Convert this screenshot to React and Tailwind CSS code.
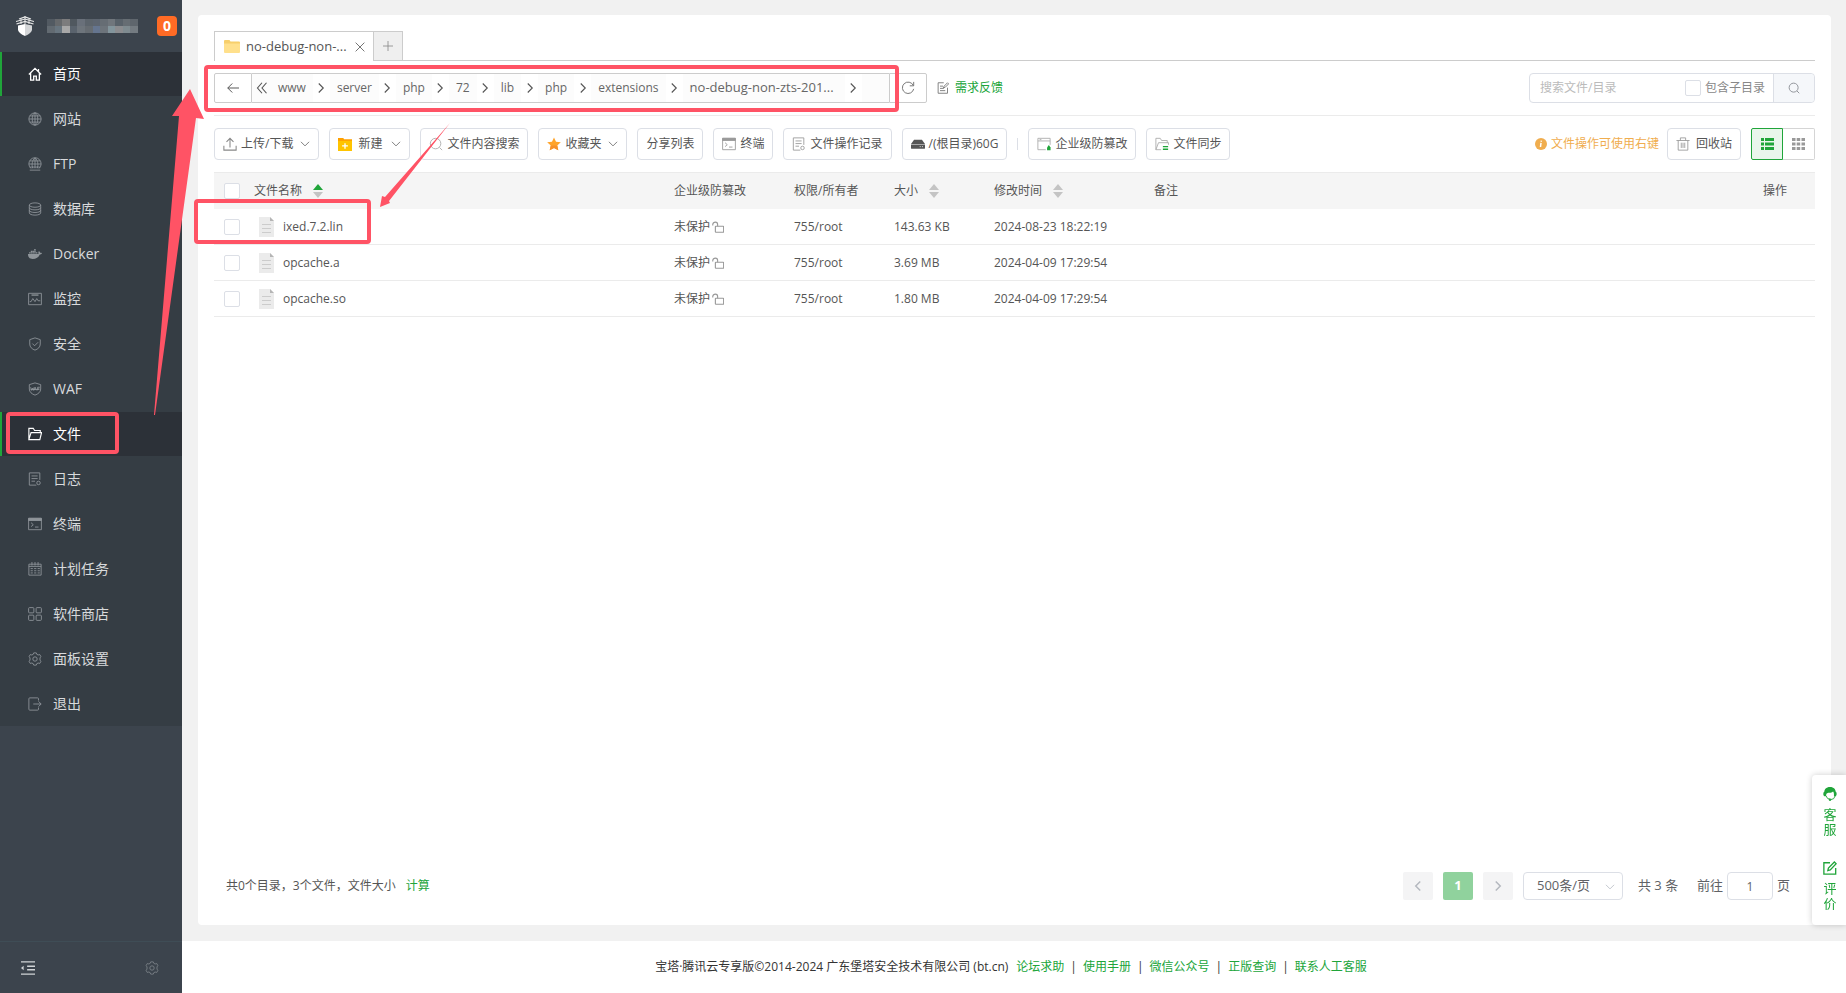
import clsx from "clsx";
import { FaDocker } from "react-icons/fa";

/* ---------- icons ---------- */

function Icon({ children, className = "size-3.5", box = "0 0 16 16", width = 1 }) {
  return (
    <svg
      viewBox={box}
      className={clsx("shrink-0", className)}
      fill="none"
      stroke="currentColor"
      strokeWidth={width}
      aria-hidden="true"
    >
      {children}
    </svg>
  );
}

const glyphs = {
  home: <path strokeWidth="1.5" d="M1 8.500 8 1.500l7 7M3 7v8h3.500v-4.500h3V15H13V7M12 5V2.200" />,
  globe: (
    <>
      <circle cx="8" cy="8" r="7" />
      <ellipse cx="8" cy="8" rx="3.200" ry="7" />
      <path d="M8 1v14M1 8h14M2 4.500h12M2 11.500h12" />
    </>
  ),
  ftp: (
    <>
      <path d="M3.500 13.200A7 7 0 1 1 12.500 13.200" />
      <path d="M5.500 13C4 9 4.500 4 8 1c3.500 3 4 8 2.500 12M8 1v12M1 8h14M2 4.500h12M2 11.500h12M2 15h12" />
    </>
  ),
  database: (
    <>
      <ellipse cx="8" cy="3.500" rx="6.500" ry="2.500" />
      <path d="M1.500 3.500v9c0 1.400 2.900 2.500 6.500 2.500s6.500-1.100 6.500-2.500v-9M1.500 6.500C1.500 8 4.400 9 8 9s6.500-1 6.500-2.500M1.500 9.500C1.500 11 4.400 12 8 12s6.500-1 6.500-2.500" />
    </>
  ),
  monitor: (
    <>
      <path d="M.7 1.500h14.600v13H.7z" />
      <path strokeWidth="1.500" d="M4 3.500h8" />
      <path d="M2 11h1.500L5.500 7.500 8 11l2-3.500 1.500 2.500H14" />
    </>
  ),
  shield: (
    <>
      <path d="m8 1 6 2v5c0 3.500-2.500 5.800-6 7-3.500-1.200-6-3.500-6-7V3z" />
      <path d="m5 7.500 2.500 2.500L11.500 6" />
    </>
  ),
  waf: (
    <>
      <path d="m8 1 6.500 2v5c0 3.500-3 5.800-6.500 7-3.500-1.200-6.500-3.500-6.500-7V3z" />
      <path d="m3 6 1 3.500L5 7l1 2.500L7 6m0 3.500L8.200 6l1.300 3.500M11 9.500V6h2.500M11 7.800h2M3 8.500h10" />
    </>
  ),
  folder: <path strokeWidth="1.300" d="M1 14.500v-13h5l1.500 2.500H14v2.500M1 14.500 3.500 6.500h12L13.500 14.500z" />,
  log: (
    <>
      <path d="M13.500 9V1h-12v14h8M4 4.500h7M4 7.500h7M4 10.500h4" />
      <circle cx="12" cy="12.500" r="2" />
    </>
  ),
  terminal: (
    <>
      <path d="M.7 1.500h14.600v13H.7z" />
      <path fill="currentColor" d="M.7 1.500h14.600V4H.7z" />
      <path d="m3.500 6.500 2.500 2.300L3.500 11M8 11.500h4" />
    </>
  ),
  calendar: (
    <>
      <path d="M1 2.500h14v12.500H1zM4.500 0v4M8 0v4M11.500 0v4M1 5h14" />
      <path d="M3 7.500h2.500M7 7.500h2.500M11 7.500h2.500M3 10h2.500M7 10h2.500M11 10h2.500M3 12.500h2.500M7 12.500h2.500M11 12.500h2.500" />
    </>
  ),
  grid: (
    <>
      <rect x=".7" y=".7" width="6" height="6" rx="1" />
      <rect x="9.300" y=".7" width="6" height="6" rx="1" />
      <rect x=".7" y="9.300" width="6" height="6" rx="1" />
      <rect x="9.300" y="9.300" width="6" height="6" rx="1" />
    </>
  ),
  gear: (
    <>
      <path d="m6.500 1-.6 1.700-1.500.7-1.800-.5L1.300 5.200l1 1.600v2.400l-1 1.600 1.300 2.300 1.800-.5 1.500.7.600 1.700h3l.6-1.700 1.500-.7 1.800.5 1.300-2.300-1-1.600V6.800l1-1.600-1.300-2.300-1.800.5-1.500-.7L9.500 1z" />
      <circle cx="8" cy="8" r="2.500" />
    </>
  ),
  exit: <path d="M12 4V2q0-1-1-1H2q-1 0-1 1v12q0 1 1 1h9q1 0 1-1v-2M6 8h9M12 5l3 3-3 3" />,
  upload: <path strokeWidth="1.200" d="M1 10v5h14v-5M8 12V2M4 5.500 8 1.500l4 4" />,
  search: (
    <>
      <circle cx="7.500" cy="7.500" r="6" />
      <path d="m12 12 3 3" />
    </>
  ),
  lock: (
    <>
      <rect x="4.500" y="7" width="11" height="8" rx=".8" strokeWidth="1.500" />
      <path strokeWidth="1.500" d="M7.500 7V4.500q0-3-3-3T1 4.500V6" />
    </>
  ),
  trash: <path d="M2.500 4v11h11V4M.5 4h15M5 4V1h6v3M6 6.500v6M8 6.500v6M10 6.500v6" />,
  note: <path strokeWidth="1.200" d="M14 7.500V15H1.500V1H9M4 5.500h4M4 8.500h5M4 11.500h7M8.500 8l1-2.500L14 1l1.500 1.500L11 7z" />,
  edit: <path strokeWidth="1.500" d="M14.500 8v7H1V2h7M5.500 11l.7-3L13 1.200l2 2L8.300 10.200z" />,
};

function Glyph({ name, className, width }) {
  if (name === "docker") return <FaDocker className={clsx("shrink-0", className)} aria-hidden="true" />;
  return (
    <Icon className={className} width={width}>
      {glyphs[name]}
    </Icon>
  );
}

function Chevron({ className, dir = "right" }) {
  return (
    <Icon className={className}>
      {dir === "right" && <path d="m5 2 6 6-6 6" />}
      {dir === "left" && <path d="M11 2 5 8l6 6" />}
      {dir === "down" && <path d="m1.500 4.500 6.500 6.500 6.500-6.500" />}
    </Icon>
  );
}

function Logo() {
  return (
    <svg viewBox="0 0 18 20" className="h-5 w-[18px]" aria-hidden="true">
      <path fill="#fff" d="M2 9.500 9 8v12q-6-2.500-7-6z" />
      <path fill="#d4d6d8" d="m9 8 7 1.500V14q-1 3.500-7 6z" />
      <path stroke="#e8e8e8" fill="none" strokeWidth="1.200" d="M.5 8 9 5.500 17.500 8M0 5.500 9 3l9 2.500M3 3l6-2 6 2" />
      <path stroke="#e8e8e8" strokeWidth="1" d="M5 2.500V8M13 2.500V8M9 0v8" />
    </svg>
  );
}

function NewFolderIcon() {
  return (
    <Icon className="size-3.5">
      <path fill="#ffa000" stroke="none" d="M0 1h6l1 1.500h9V6H0z" />
      <path fill="#ffc400" stroke="none" d="M0 4.500h16V16H0z" />
      <path stroke="#fff" strokeWidth="1.500" d="M8 7v6.500M4.700 10.200h6.600" />
    </Icon>
  );
}

function TabFolderIcon() {
  return (
    <Icon className="size-4">
      <path fill="#f7cf6b" stroke="none" d="M0 2q0-1 1-1h4.500l1 1.500H15q1 0 1 1V6H0z" />
      <path fill="#ffe08c" stroke="none" d="M0 4.500h16V13q0 1-1 1H1q-1 0-1-1z" />
    </Icon>
  );
}

function StarIcon() {
  return (
    <Icon className="size-3.5">
      <path fill="#ffa42b" stroke="none" d="m8 .5 2.300 5 5.500.6-4.100 3.600 1.200 5.500L8 12.500l-4.900 2.700 1.200-5.500L.2 6.100l5.500-.6z" />
      <path fill="#f7912a" stroke="none" d="m8 12.500 4.900 2.700-1.200-5.500L4.300 9.700l-1.200 5.500z" />
    </Icon>
  );
}

function DiskIcon() {
  return (
    <Icon className="size-3.5 text-[#555]">
      <path fill="currentColor" stroke="none" d="M3.500 3h9L16 8H0zM0 8.500h16v4q0 1-1 1H1q-1 0-1-1z" />
      <path stroke="#fff" d="M10 11h1M12.500 11h1" />
    </Icon>
  );
}

function TamperIcon() {
  return (
    <Icon className="size-3.5 text-[#aaa]">
      <path d="M15 9V1.500H1v13h9M1 4.500h14M3 3h2" />
      <path fill="#20a53a" stroke="none" d="M11.500 12 13.500 9l2 3v3h-4z" />
    </Icon>
  );
}

function SyncIcon() {
  return (
    <Icon className="size-3.5 text-[#aaa]">
      <path d="M7 14.500H1v-13h5L7.500 4H14v3M1 14.500 4 6.500h11.500V9" />
      <path stroke="#20a53a" strokeWidth="1.500" d="M9 11h6M9 14h6" />
    </Icon>
  );
}

function FileIcon() {
  return (
    <svg viewBox="0 0 15 20" className="h-5 w-[15px] shrink-0" aria-hidden="true">
      <path fill="#ebebeb" d="M0 0h11l4 4v16H0z" />
      <path fill="#b5b5b5" d="M11 0l4 4h-4z" />
      <path stroke="#ccc" d="M3 7.500h9M3 11.500h9M3 15.500h9" />
    </svg>
  );
}

function SortIcon({ asc }) {
  return (
    <svg viewBox="0 0 10 14" className="h-3.5 w-2.5" aria-hidden="true">
      <path d="M0 6h10L5 0z" fill={asc ? "#20a53a" : "#c4c4c4"} />
      <path d="M0 8h10l-5 6z" fill="#c4c4c4" />
    </svg>
  );
}

/* ---------- sidebar ---------- */

const menu = [
  { label: "首页", icon: "home", active: true },
  { label: "网站", icon: "globe" },
  { label: "FTP", icon: "ftp" },
  { label: "数据库", icon: "database" },
  { label: "Docker", icon: "docker" },
  { label: "监控", icon: "monitor" },
  { label: "安全", icon: "shield" },
  { label: "WAF", icon: "waf" },
  { label: "文件", icon: "folder", active: true },
  { label: "日志", icon: "log" },
  { label: "终端", icon: "terminal" },
  { label: "计划任务", icon: "calendar" },
  { label: "软件商店", icon: "grid" },
  { label: "面板设置", icon: "gear" },
  { label: "退出", icon: "exit" },
];

// masked host name
const mosaic = [
  "#525a62", "#66696c", "#7c7c7d", "#50585f", "#69707a", "#5c646c", "#5d6570", "#666d74", "#70767c", "#59626a", "#666d73", "#5f666d",
  "#626a71", "#68757f", "#a8a8a8", "#5a636d", "#6e757c", "#666c72", "#65758f", "#6d747b", "#83959c", "#8b8c8f", "#7f8b90", "#747b81",
];

function Sidebar() {
  return (
    <aside className="flex w-[182px] shrink-0 flex-col bg-[#3c444d]">
      <div className="flex h-[52px] items-center pr-[5px] pl-4">
        <Logo />
        <div className="ml-[13px] grid h-3.5 w-[91px] grid-cols-12 grid-rows-2">
          {mosaic.map((c, i) => (
            <span key={i} style={{ backgroundColor: c }} />
          ))}
        </div>
        <span className="ml-auto flex size-5 items-center justify-center rounded bg-[#ff6b25] text-sm font-bold text-white">0</span>
      </div>
      <nav className="flex flex-col gap-px bg-[#353d44]">
        {menu.map((m) => (
          <a
            key={m.label}
            href="#"
            className={clsx(
              "flex h-11 items-center gap-[11px] border-l-2 pl-[26px] text-sm",
              m.active ? "border-[#20a53a] bg-[#2c3138] text-white" : "border-transparent text-[#d8dadc]"
            )}
          >
            <Glyph name={m.icon} className={clsx("size-3.5", !m.active && "text-[#8f959a]")} />
            {m.label}
          </a>
        ))}
      </nav>
      <div className="mt-auto flex h-[52px] items-center justify-between border-t border-[#3f4d56] pr-[23px] pl-[21px]">
        <button type="button" aria-label="收起菜单" className="text-[#d0d3d6]">
          <Icon className="size-3.5">
            <path d="M0 1h16M7 6h9M7 10h9M0 15h16" strokeWidth="1.500" />
            <path d="M0 8l3-2.500v5z" fill="currentColor" stroke="none" />
          </Icon>
        </button>
        <button type="button" aria-label="设置" className="text-[#7b8288]">
          <Glyph name="gear" />
        </button>
      </div>
    </aside>
  );
}

/* ---------- file manager ---------- */

const crumbs = ["www", "server", "php", "72", "lib", "php", "extensions"];

function PathBar() {
  return (
    <div className="mt-3 flex items-center border-b border-[#ebebeb] pb-3">
      <button type="button" aria-label="后退" className="flex h-[30px] w-[38px] items-center justify-center rounded-l-xs border border-[#ccc] text-[#555]">
        <Icon className="size-3">
          <path d="M1 8h15M7 2 1 8l6 6" strokeWidth="1.300" />
        </Icon>
      </button>
      <div className="flex h-[30px] w-[637px] items-stretch border-y border-[#ccc] bg-white text-xs text-[#666]">
        <span className="flex w-[19px] items-center justify-center bg-[#fcfcfc]">
          <Icon className="size-3 text-[#555]">
            <path d="M8 1 2 8l6 7M14 1 8 8l6 7" strokeWidth="1.500" />
          </Icon>
        </span>
        {crumbs.map((c, i) => (
          <span key={i} className="flex items-stretch">
            <a href="#" className="flex items-center bg-[#fcfcfc] px-[7px]">{c}</a>
            <span className="flex w-[17px] items-center justify-center">
              <Chevron className="size-3 text-[#555] stroke-[1.5]" />
            </span>
          </span>
        ))}
        <a href="#" className="flex w-[162px] items-center bg-[#fcfcfc] px-[7px] text-[13px]">no-debug-non-zts-201...</a>
        <span className="flex w-[17px] items-center justify-center">
          <Chevron className="size-3 text-[#555] stroke-[1.5]" />
        </span>
        <span className="flex-1 bg-[#fcfcfc]" />
      </div>
      <button type="button" aria-label="刷新" className="flex h-[30px] w-[38px] items-center justify-center rounded-r-xs border border-[#ccc] text-[#666]">
        <Icon className="size-3.5">
          <path d="M14 5A6.500 6.500 0 1 0 14.500 9M14.500 1v4.500H10" />
        </Icon>
      </button>
      <a href="#" className="ml-[10px] flex items-center gap-1.5 text-xs text-[#20a53a]">
        <Glyph name="note" className="size-3 text-[#777]" />
        需求反馈
      </a>
      <div className="ml-auto flex h-[30px] w-[286px] rounded border border-[#dcdfe6]">
        <input
          type="text"
          aria-label="搜索文件/目录"
          placeholder="搜索文件/目录"
          className="min-w-0 flex-1 pl-2.5 text-xs outline-none placeholder:text-[#bbb]"
        />
        <label className="flex items-center gap-1 pr-2 text-xs text-[#888]">
          <Checkbox />
          包含子目录
        </label>
        <button type="button" aria-label="搜索" className="flex w-[41px] items-center justify-center rounded-r border-l border-[#dcdfe6] bg-[#f5f7fa] text-[#909399]">
          <Glyph name="search" className="size-3" width={1.3} />
        </button>
      </div>
    </div>
  );
}

function Checkbox(props) {
  return <input type="checkbox" className="block size-4 shrink-0 appearance-none rounded-xs border border-[#dcdfe6] bg-white" {...props} />;
}

function ToolButton({ icon, children, menu: hasMenu, gap = "gap-1" }) {
  return (
    <button type="button" className={clsx("flex h-8 items-center rounded border border-[#dcdfe6] bg-white px-2 text-xs whitespace-nowrap text-[#555]", gap)}>
      {icon}
      {children}
      {hasMenu && <Chevron dir="down" className="ml-[3px] size-2.5 stroke-[1.5] text-[#777]" />}
    </button>
  );
}

function Toolbar() {
  return (
    <div className="flex items-center gap-2.5 py-3">
      <ToolButton icon={<Glyph name="upload" className="size-3.5 text-[#888]" />} menu>上传/下载</ToolButton>
      <ToolButton icon={<NewFolderIcon />} menu gap="gap-1.5">新建</ToolButton>
      <ToolButton icon={<Glyph name="search" className="size-3.5 text-[#aaa]" />}>文件内容搜索</ToolButton>
      <ToolButton icon={<StarIcon />} menu>收藏夹</ToolButton>
      <ToolButton>分享列表</ToolButton>
      <ToolButton icon={<Glyph name="terminal" className="size-3.5 text-[#999]" />}>终端</ToolButton>
      <ToolButton icon={<Glyph name="log" className="size-3.5 text-[#999]" />}>文件操作记录</ToolButton>
      <ToolButton icon={<DiskIcon />}>/(根目录)60G</ToolButton>
      <span className="h-3 w-px bg-[#dcdfe6]" />
      <ToolButton icon={<TamperIcon />}>企业级防篡改</ToolButton>
      <ToolButton icon={<SyncIcon />}>文件同步</ToolButton>
      <div className="ml-auto flex items-center">
        <Icon className="mr-1 size-3">
          <circle cx="8" cy="8" r="8" fill="#f0ad4e" stroke="none" />
          <path d="M8.500 3.500 8.300 5M8 6.500 7.300 12" stroke="#fff" strokeWidth="2" />
        </Icon>
        <span className="mr-2 text-xs text-[#f0ad4e]">文件操作可使用右键</span>
        <ToolButton gap="gap-1.5" icon={<Glyph name="trash" className="size-3.5 text-[#999]" />}>回收站</ToolButton>
        <button type="button" aria-label="列表视图" className="ml-2.5 flex size-8 items-center justify-center rounded-l-xs border border-[#20a53a] bg-[#e9f6eb] text-[#20a53a]">
          <svg viewBox="0 0 13 12" className="h-3 w-[13px]" fill="currentColor" aria-hidden="true">
            <path d="M0 0h3v3H0zM4 0h9v3H4zM0 4.500h3v3H0zM4 4.500h9v3H4zM0 9h3v3H0zM4 9h9v3H4z" />
          </svg>
        </button>
        <button type="button" aria-label="图标视图" className="flex size-8 items-center justify-center rounded-r-xs border border-l-0 border-[#d5d5d5] text-[#999]">
          <svg viewBox="0 0 13 12" className="h-3 w-[13px]" fill="currentColor" aria-hidden="true">
            <path d="M0 0h3.500v3H0zM4.700 0h3.500v3H4.700zM9.500 0H13v3H9.500zM0 4.500h3.500v3H0zM4.700 4.500h3.500v3H4.700zM9.500 4.500H13v3H9.500zM0 9h3.500v3H0zM4.700 9h3.500v3H4.700zM9.500 9H13v3H9.500z" />
          </svg>
        </button>
      </div>
    </div>
  );
}

const files = [
  { name: "ixed.7.2.lin", size: "143.63 KB", time: "2024-08-23 18:22:19" },
  { name: "opcache.a", size: "3.69 MB", time: "2024-04-09 17:29:54" },
  { name: "opcache.so", size: "1.80 MB", time: "2024-04-09 17:29:54" },
];

function FileTable() {
  return (
    <table className="w-full table-fixed border-separate border-spacing-0 text-left text-xs text-[#555]">
      <colgroup>
        <col className="w-[30px]" />
        <col className="w-[420px]" />
        <col className="w-[120px]" />
        <col className="w-[100px]" />
        <col className="w-[100px]" />
        <col className="w-[160px]" />
        <col />
        <col className="w-[100px]" />
      </colgroup>
      <thead>
        <tr className="bg-[#f5f5f5] *:h-[37px] *:border-t *:border-[#ebebeb] *:px-2.5 *:font-normal">
          <th><Checkbox aria-label="全选" /></th>
          <th>
            <span className="flex items-center gap-[11px]">文件名称<SortIcon asc /></span>
          </th>
          <th>企业级防篡改</th>
          <th>权限/所有者</th>
          <th>
            <span className="flex items-center gap-[11px]">大小<SortIcon /></span>
          </th>
          <th>
            <span className="flex items-center gap-[11px]">修改时间<SortIcon /></span>
          </th>
          <th>备注</th>
          <th className="text-right"><span className="pr-[18px]">操作</span></th>
        </tr>
      </thead>
      <tbody>
        {files.map((f) => (
          <tr key={f.name} className="*:h-9 *:border-b *:border-[#ebebeb] *:px-2.5">
            <td><Checkbox aria-label={f.name} /></td>
            <td>
              <span className="flex items-center gap-[9px] pl-[5px]"><FileIcon />{f.name}</span>
            </td>
            <td>
              <span className="flex items-center gap-0.5">
                未保护<Glyph name="lock" className="size-3 text-[#999]" />
              </span>
            </td>
            <td>755/root</td>
            <td>{f.size}</td>
            <td className="whitespace-nowrap">{f.time}</td>
            <td />
            <td />
          </tr>
        ))}
      </tbody>
    </table>
  );
}

function Pagination() {
  return (
    <div className="mt-auto flex items-center pr-[25px] pb-[25px] pl-3 text-xs text-[#555]">
      <span>共0个目录，3个文件，文件大小</span>
      <a href="#" className="ml-2.5 text-[#20a53a]">计算</a>
      <div className="ml-auto flex items-center text-[13px] text-[#606266]">
        <button type="button" aria-label="上一页" className="flex h-7 w-[30px] items-center justify-center rounded-xs bg-[#f4f4f5] text-[#b4b8bf]">
          <Chevron dir="left" className="size-3 stroke-2" />
        </button>
        <button type="button" className="ml-2.5 flex h-7 w-[30px] items-center justify-center rounded-xs bg-[#90d29d] font-bold text-white">1</button>
        <button type="button" aria-label="下一页" className="ml-2.5 flex h-7 w-[30px] items-center justify-center rounded-xs bg-[#f4f4f5] text-[#b4b8bf]">
          <Chevron className="size-3 stroke-2" />
        </button>
        <div className="relative ml-2.5">
          <select aria-label="每页条数" className="block h-7 w-[100px] appearance-none rounded border border-[#dcdfe6] bg-white pl-[13px]">
            <option>500条/页</option>
          </select>
          <Chevron dir="down" className="pointer-events-none absolute top-2.5 right-2 size-2.5 stroke-[1.5] text-[#c0c4cc]" />
        </div>
        <span className="ml-[15px] w-[42px] whitespace-nowrap">共 3 条</span>
        <label className="ml-[17px] flex items-center gap-1">
          前往
          <input type="text" defaultValue="1" className="h-7 w-[46px] rounded border border-[#dcdfe6] text-center text-xs" />
          页
        </label>
      </div>
    </div>
  );
}

function FileManager() {
  return (
    <section className="flex flex-1 flex-col rounded bg-white px-4 pt-4">
      <div className="flex h-[30px] border-b border-[#ccc]">
        <div className="-mb-px flex w-[160px] items-center border border-b-0 border-[#ccc] bg-white pr-2 pl-[9px] text-[13px] text-[#555]">
          <TabFolderIcon />
          <span className="ml-1.5 whitespace-nowrap">no-debug-non-...</span>
          <button type="button" aria-label="关闭" className="ml-auto">
            <Icon className="size-2.5">
              <path d="m1 1 14 14M15 1 1 15" strokeWidth="1.300" />
            </Icon>
          </button>
        </div>
        <button type="button" aria-label="新标签" className="flex w-[29px] items-center justify-center border border-b-0 border-l-0 border-[#ccc] bg-[#efefef] text-[#888]">
          <Icon className="size-2.5">
            <path d="M8 0v16M0 8h16" strokeWidth="1.300" />
          </Icon>
        </button>
      </div>
      <PathBar />
      <Toolbar />
      <FileTable />
      <Pagination />
    </section>
  );
}

const links = ["论坛求助", "使用手册", "微信公众号", "正版查询", "联系人工客服"];

function Footer() {
  return (
    <footer className="flex h-[52px] items-center justify-center bg-white pr-1.5 text-xs text-[#333]">
      <span className="mr-0.5">宝塔·腾讯云专享版©2014-2024 广东堡塔安全技术有限公司 (bt.cn)</span>
      {links.map((l, i) => (
        <span key={l} className="flex items-center">
          {i > 0 && <span className="ml-1.5">|</span>}
          <a href="#" className="ml-1.5 text-[#20a53a]">{l}</a>
        </span>
      ))}
    </footer>
  );
}

function SideWidget() {
  return (
    <div className="fixed right-0 bottom-[68px] flex h-[150px] w-[34px] flex-col items-center rounded-l bg-white pt-3 pl-0.5 text-[13px] leading-[15px] text-[#20a53a] shadow-[0_0_6px_rgba(0,0,0,0.2)]">
      <a href="#" className="flex flex-col items-center">
        <Icon className="size-3.5">
          <path fill="currentColor" stroke="none" d="M8 0C3.500 0 1.500 3 1.500 5.500 0 6 0 10 1.500 10.500h2C3.500 8 4 7 6 6.500c2 .3 4.500-.2 5.500-1.500 1 1 1.200 3 1 5.500h2C16 10 16 6 14.500 5.500 14.500 3 12.500 0 8 0z" />
          <path d="M3.500 10q1 4 4.500 4M14 10q-1 4.500-5.500 4.500" />
          <circle cx="8" cy="14.500" r="1" fill="currentColor" />
        </Icon>
        <span className="mt-1.5 w-[13px]">客服</span>
      </a>
      <a href="#" className="mt-6 flex flex-col items-center">
        <Glyph name="edit" />
        <span className="mt-1.5 w-[13px]">评价</span>
      </a>
    </div>
  );
}

/* red boxes and arrows drawn over the page */
function Annotations() {
  return (
    <div className="pointer-events-none absolute inset-0 overflow-hidden">
      <div className="absolute top-[65px] left-[204px] h-[47px] w-[695px] rounded border-4 border-[#ff5365]" />
      <div className="absolute top-[199px] left-[194px] h-[45px] w-[177px] rounded border-4 border-[#ff5365]" />
      <div className="absolute top-[412px] left-[6px] h-[42px] w-[113px] rounded border-4 border-[#ff5365]" />
      <svg className="absolute top-0 left-0 h-[420px] w-[460px]" viewBox="0 0 460 420" fill="#ff5365" aria-hidden="true">
        <path d="M190 89 204 119 196 118 155 415 154 415 179 116 172 116z" />
        <path d="M450 123 389 201 390 203 380 207 382 196 385 197z" />
      </svg>
    </div>
  );
}

export default function App() {
  return (
    <div className="relative flex min-h-screen bg-[#f1f1f1] font-['Open_Sans','Noto_Sans_CJK_SC',sans-serif]">
      <Sidebar />
      <div className="flex min-w-0 flex-1 flex-col">
        <main className="flex flex-1 flex-col pt-[15px] pr-[15px] pb-4 pl-4">
          <FileManager />
        </main>
        <Footer />
      </div>
      <SideWidget />
      <Annotations />
    </div>
  );
}
